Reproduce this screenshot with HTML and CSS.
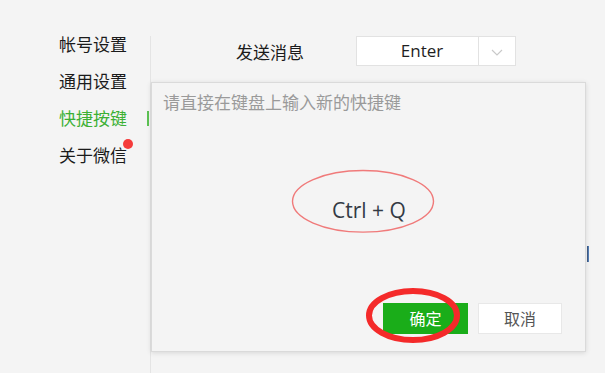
FILE: index.html
```html
<!DOCTYPE html>
<html lang="zh-CN">
<head>
<meta charset="utf-8">
<title>快捷按键</title>
<link rel="stylesheet" href="styles.css">
</head>
<body>
<div class="app">
  <nav class="sidebar">
    <div class="nav-item">帐号设置</div>
    <div class="nav-item">通用设置</div>
    <div class="nav-item active"><span>快捷按键</span><i class="indicator"></i></div>
    <div class="nav-item"><span class="with-dot">关于微信<i class="dot"></i></span></div>
  </nav>
  <main class="main">
    <div class="row">
      <span class="label">发送消息</span>
      <div class="select">
        <span class="select-value">Enter</span>
        <span class="select-arrow">
          <svg width="12" height="7" viewBox="0 0 12 7"><path d="M1 1 L6 6 L11 1" fill="none" stroke="#c9c9c9" stroke-width="1.2"/></svg>
        </span>
      </div>
    </div>
  </main>
</div>

<span class="peek"></span>

<div class="dialog">
  <div class="hint">请直接在键盘上输入新的快捷键</div>
  <div class="keys">Ctrl + Q</div>
  <div class="footer">
    <button class="btn btn-primary">确定</button>
    <button class="btn btn-default">取消</button>
  </div>
</div>

<svg class="marks" width="605" height="373" viewBox="0 0 605 373">
  <ellipse cx="363" cy="201.3" rx="70.5" ry="30.8" fill="none" stroke="#f07a7a" stroke-width="1.4"/>
  <ellipse cx="413" cy="315.5" rx="44" ry="24.5" fill="none" stroke="#f42a2a" stroke-width="6"/>
</svg>
</body>
</html>
```
FILE: styles.css
```css
* { box-sizing: border-box; }

html, body {
  margin: 0;
  padding: 0;
}

body {
  width: 605px;
  height: 373px;
  overflow: hidden;
  background: #f4f4f4;
  font-family: "Open Sans", "Noto Sans CJK SC", sans-serif;
  color: #1b1b1b;
  position: relative;
}

.app {
  display: flex;
  height: 373px;
}

.sidebar {
  width: 150px;
  flex: none;
  padding-top: 35px;
}

.nav-item {
  height: 37px;
  padding-left: 59px;
  font-size: 17px;
  line-height: 20px;
  display: flex;
  justify-content: space-between;
  align-items: flex-start;
  color: #1b1b1b;
}

.nav-item.active {
  color: #3cb034;
}

.indicator {
  display: block;
  width: 2px;
  height: 15px;
  margin-top: 2px;
  margin-right: 1px;
  background: #5cc253;
}

.with-dot {
  position: relative;
}

.dot {
  position: absolute;
  right: -6px;
  top: -7px;
  width: 10px;
  height: 10px;
  border-radius: 50%;
  background: #f53b3b;
}

.main {
  flex: 1;
  margin-top: 36px;
  border-left: 1px solid #e4e4e4;
}

.row {
  display: flex;
  align-items: center;
  padding-left: 85px;
  height: 30px;
}

.label {
  font-size: 17px;
  line-height: 20px;
  width: 120px;
  margin-top: 4px;
}

.select {
  display: flex;
  width: 160px;
  height: 30px;
  border: 1px solid #e2e2e2;
  background: #ffffff;
}

.select-value {
  width: 122px;
  border-right: 1px solid #e2e2e2;
  font-size: 17px;
  line-height: 28px;
  text-align: center;
  color: #1f1f1f;
  padding-left: 9px;
}

.select-arrow {
  flex: 1;
  display: flex;
  align-items: center;
  justify-content: center;
  padding-top: 2px;
}

.peek {
  position: absolute;
  left: 587px;
  top: 246px;
  width: 2px;
  height: 16px;
  background: linear-gradient(to right, #3a4a6a, #5b8fd0);
}

.dialog {
  position: absolute;
  left: 151px;
  top: 82px;
  width: 435px;
  height: 270px;
  background: #f4f4f4;
  border: 1px solid #dadada;
  box-shadow: 0 1px 5px rgba(0, 0, 0, 0.12);
  display: flex;
  flex-direction: column;
}

.hint {
  padding: 10px 0 0 11px;
  font-size: 17px;
  line-height: 20px;
  color: #9a9a9a;
}

.keys {
  margin-top: 84px;
  text-align: center;
  font-size: 21px;
  line-height: 26px;
  color: #333a44;
  padding-left: 1px;
}

.footer {
  margin-top: auto;
  display: flex;
  justify-content: flex-end;
  gap: 10px;
  padding: 0 23px 17px 0;
}

.btn {
  width: 85px;
  height: 31px;
  font-family: "Open Sans", "Noto Sans CJK SC", sans-serif;
  font-size: 16px;
  line-height: 20px;
  border: 1px solid transparent;
  padding: 0;
  margin: 0;
}

.btn-primary {
  background: #1aad19;
  color: #ffffff;
  border-color: #1aad19;
}

.btn-default {
  width: 84px;
  background: #ffffff;
  color: #555555;
  border-color: #e8e8e8;
}

.marks {
  position: absolute;
  left: 0;
  top: 0;
  pointer-events: none;
}
```
